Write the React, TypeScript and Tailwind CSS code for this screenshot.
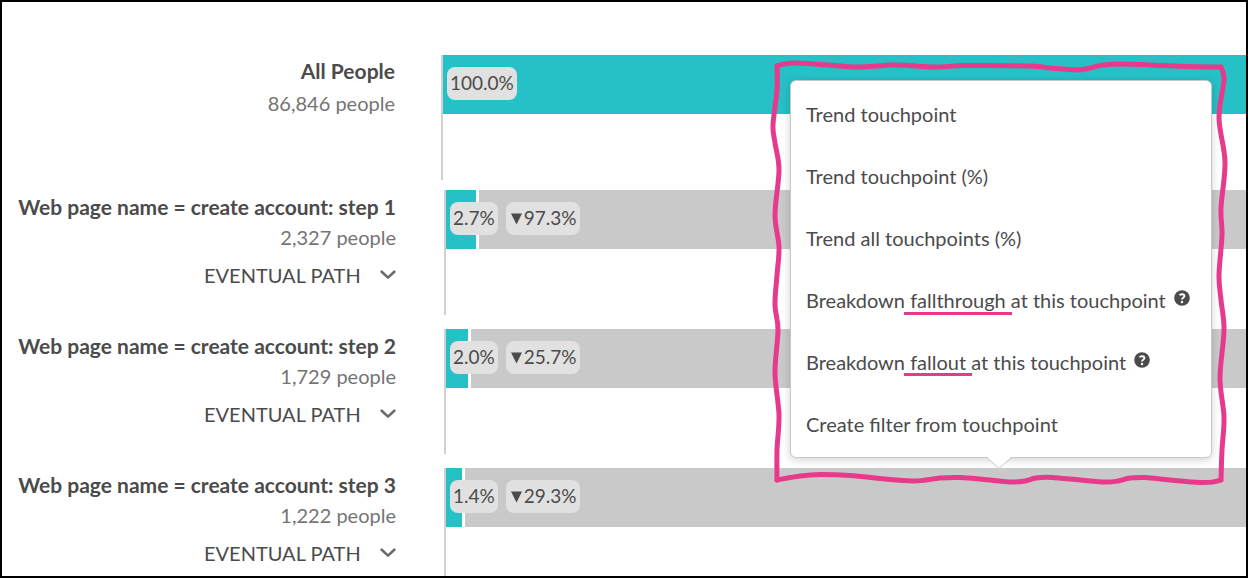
import React from "react";

type Point = [number, number];

type Step = {
  name: string;
  people: string;
  rate: string;
  drop?: string;
  bar: string;
  row: string;
  axis: string;
  offset: string;
  title: string;
};

const steps: Step[] = [
  {
    name: "All People",
    people: "86,846 people",
    rate: "100.0%",
    bar: "flex-1",
    row: "h-[125px] mb-2.5",
    axis: "ml-[45px]",
    offset: "pr-px",
    title: "mb-0.5 pt-0.5",
  },
  {
    name: "Web page name = create account: step 1",
    people: "2,327 people",
    rate: "2.7%",
    drop: "97.3%",
    bar: "w-[30px]",
    row: "h-[125px] mb-3.5",
    axis: "ml-12",
    offset: "",
    title: "pt-[3px]",
  },
  {
    name: "Web page name = create account: step 2",
    people: "1,729 people",
    rate: "2.0%",
    drop: "25.7%",
    bar: "w-[22px]",
    row: "h-[125px] mb-3.5",
    axis: "ml-12",
    offset: "",
    title: "pt-[3px]",
  },
  {
    name: "Web page name = create account: step 3",
    people: "1,222 people",
    rate: "1.4%",
    drop: "29.3%",
    bar: "w-4",
    row: "flex-1",
    axis: "ml-12",
    offset: "",
    title: "pt-[3px]",
  },
];

function smooth(points: Point[]): string {
  let d = `M${points[0][0]} ${points[0][1]}`;
  for (let i = 0; i < points.length - 1; i++) {
    const a = points[Math.max(0, i - 1)];
    const b = points[i];
    const c = points[i + 1];
    const e = points[Math.min(points.length - 1, i + 2)];
    d += ` C${b[0] + (c[0] - a[0]) / 6} ${b[1] + (c[1] - a[1]) / 6} ${c[0] - (e[0] - b[0]) / 6} ${c[1] - (e[1] - b[1]) / 6} ${c[0]} ${c[1]}`;
  }
  return d;
}

const strokes: Point[][] = [
  [[777, 66], [784, 64], [795, 63], [815, 64], [840, 66], [860, 67], [895, 65], [935, 67], [965, 65.5], [1030, 66], [1050, 68], [1076, 70], [1090, 68], [1103, 65], [1122, 64], [1150, 65], [1185, 66.5], [1221, 67]],
  [[1221, 67], [1224, 80], [1219, 118], [1225, 162], [1221, 208], [1222, 235], [1219, 275], [1221, 300], [1224, 330], [1220, 378], [1224, 417], [1222, 450], [1221, 480]],
  [[777, 480], [800, 476], [820, 474.5], [850, 475.5], [885, 479], [912, 481], [926, 480], [940, 478], [960, 477.5], [990, 480], [1012, 482], [1025, 481], [1036, 478], [1052, 477.5], [1080, 480], [1105, 482], [1118, 481], [1130, 478], [1145, 477.5], [1170, 480], [1200, 482.5], [1213, 482], [1221, 480]],
  [[777, 66], [777, 90], [773, 125], [775, 143], [779, 170], [775, 215], [779, 247], [777, 275], [775, 305], [778, 330], [775, 373], [779, 415], [777, 450], [777, 480]],
];

function HelpIcon() {
  return (
    <svg className="ml-2 -mt-1 size-4 shrink-0" viewBox="0 0 16 16" aria-hidden="true">
      <circle cx="8" cy="8" r="7.8" fill="#4b4b4b" />
      <path d="M5.5 5.3C6.3 3.9 10.4 3.5 10.4 6.1C10.4 7.9 8 7.7 8 9.6" fill="none" stroke="#fff" strokeWidth="1.9" />
      <circle cx="8" cy="12" r="1.2" fill="#fff" />
    </svg>
  );
}

function MenuItem({ children }: { children: React.ReactNode }) {
  return (
    <li role="none">
      <button role="menuitem" className="flex h-[62px] w-full items-center whitespace-pre px-[15px] text-left">
        {children}
      </button>
    </li>
  );
}

function TouchpointMenu() {
  return (
    <div className="absolute right-[34px] top-[78px] w-[422px] text-[20px] text-[#4b4b4b]">
      <ul role="menu" className="rounded-md border border-[#c8c8c8] bg-white py-0.5 shadow-[0_2px_8px_rgba(0,0,0,0.18)]">
        <MenuItem>Trend touchpoint</MenuItem>
        <MenuItem>Trend touchpoint (%)</MenuItem>
        <MenuItem>Trend all touchpoints (%)</MenuItem>
        <MenuItem>
          <span>
            Breakdown{" "}
            <span className="relative">
              fallthrough
              <span className="absolute -left-1.5 -right-1.5 top-full h-[3px] bg-[#e83a8c]" />
            </span>{" "}
            at this touchpoint
          </span>
          <HelpIcon />
        </MenuItem>
        <MenuItem>
          <span>
            Breakdown{" "}
            <span className="relative">
              fallout
              <span className="absolute -left-1.5 -right-1.5 -bottom-0.5 h-[3px] bg-[#e83a8c]" />
            </span>{" "}
            at this touchpoint
          </span>
          <HelpIcon />
        </MenuItem>
        <MenuItem>Create filter from touchpoint</MenuItem>
      </ul>
      <svg className="absolute left-[197px] top-[377px] h-3 w-6" viewBox="0 0 24 12" aria-hidden="true">
        <path d="M0 0H24L12 11.5Z" fill="#fff" />
        <path d="M0 0.5L12 11.5L24 0.5" fill="none" stroke="#c8c8c8" />
      </svg>
      <svg className="pointer-events-none absolute -left-[30px] -top-[30px] h-[450px] w-[480px]" viewBox="760 50 480 450" aria-hidden="true">
        {strokes.map((s, i) => (
          <path key={i} d={smooth(s)} fill="none" stroke="#e83a8c" strokeWidth="5" strokeLinecap="round" />
        ))}
      </svg>
    </div>
  );
}

function Badge({ children }: { children: React.ReactNode }) {
  return (
    <span className="flex h-[33px] items-center rounded-lg bg-[#e1e1e1] px-[3px] text-[19px] text-[#4b4b4b]">
      {children}
    </span>
  );
}

function StepRow({ step }: { step: Step }) {
  return (
    <section className={`flex ${step.row}`}>
      <div className={`flex w-[394px] shrink-0 flex-col items-end whitespace-nowrap ${step.offset}`}>
        <h2 className={`text-[21px] font-bold leading-7 text-[#4b4b4b] ${step.title}`}>{step.name}</h2>
        <p className="text-[20px] leading-8 text-[#747474]">{step.people}</p>
        {step.drop && (
          <div className="relative mt-2 flex items-center">
            <select
              aria-label={`Path type for ${step.name}`}
              className="appearance-none bg-transparent pr-[34px] text-[20px] leading-7 text-[#4b4b4b]"
            >
              <option>EVENTUAL PATH</option>
            </select>
            <svg className="pointer-events-none absolute right-0 h-4 w-4" viewBox="0 0 16 16" aria-hidden="true">
              <path d="M1.7 4.7L8 10.6L14.3 4.7" fill="none" stroke="#6b6b6b" strokeWidth="2.6" strokeLinecap="round" strokeLinejoin="round" />
            </svg>
          </div>
        )}
      </div>
      <div className={`min-w-0 flex-1 border-l-2 border-[#d0d0d0] ${step.axis}`}>
        <div className="relative flex h-[59px] gap-[3px]">
          <div className={`bg-[#26c0c7] ${step.bar}`} />
          {step.drop && <div className="flex-1 bg-[#c9c9c9]" />}
          <div className="absolute left-1 top-3 flex gap-2">
            <Badge>{step.rate}</Badge>
            {step.drop && (
              <Badge>
                <svg className="ml-0.5 mr-0.5 h-3 w-[11px]" viewBox="0 0 11 12" aria-hidden="true">
                  <path d="M0 0.5H11L5.5 11.5Z" fill="#4b4b4b" />
                </svg>
                {step.drop}
              </Badge>
            )}
          </div>
        </div>
      </div>
    </section>
  );
}

export default function App() {
  return (
    <main className="relative flex min-h-screen flex-col overflow-hidden border-2 border-black bg-white pt-[53px] font-[Lato,sans-serif]">
      {steps.map((step) => (
        <StepRow key={step.name} step={step} />
      ))}
      <TouchpointMenu />
    </main>
  );
}
